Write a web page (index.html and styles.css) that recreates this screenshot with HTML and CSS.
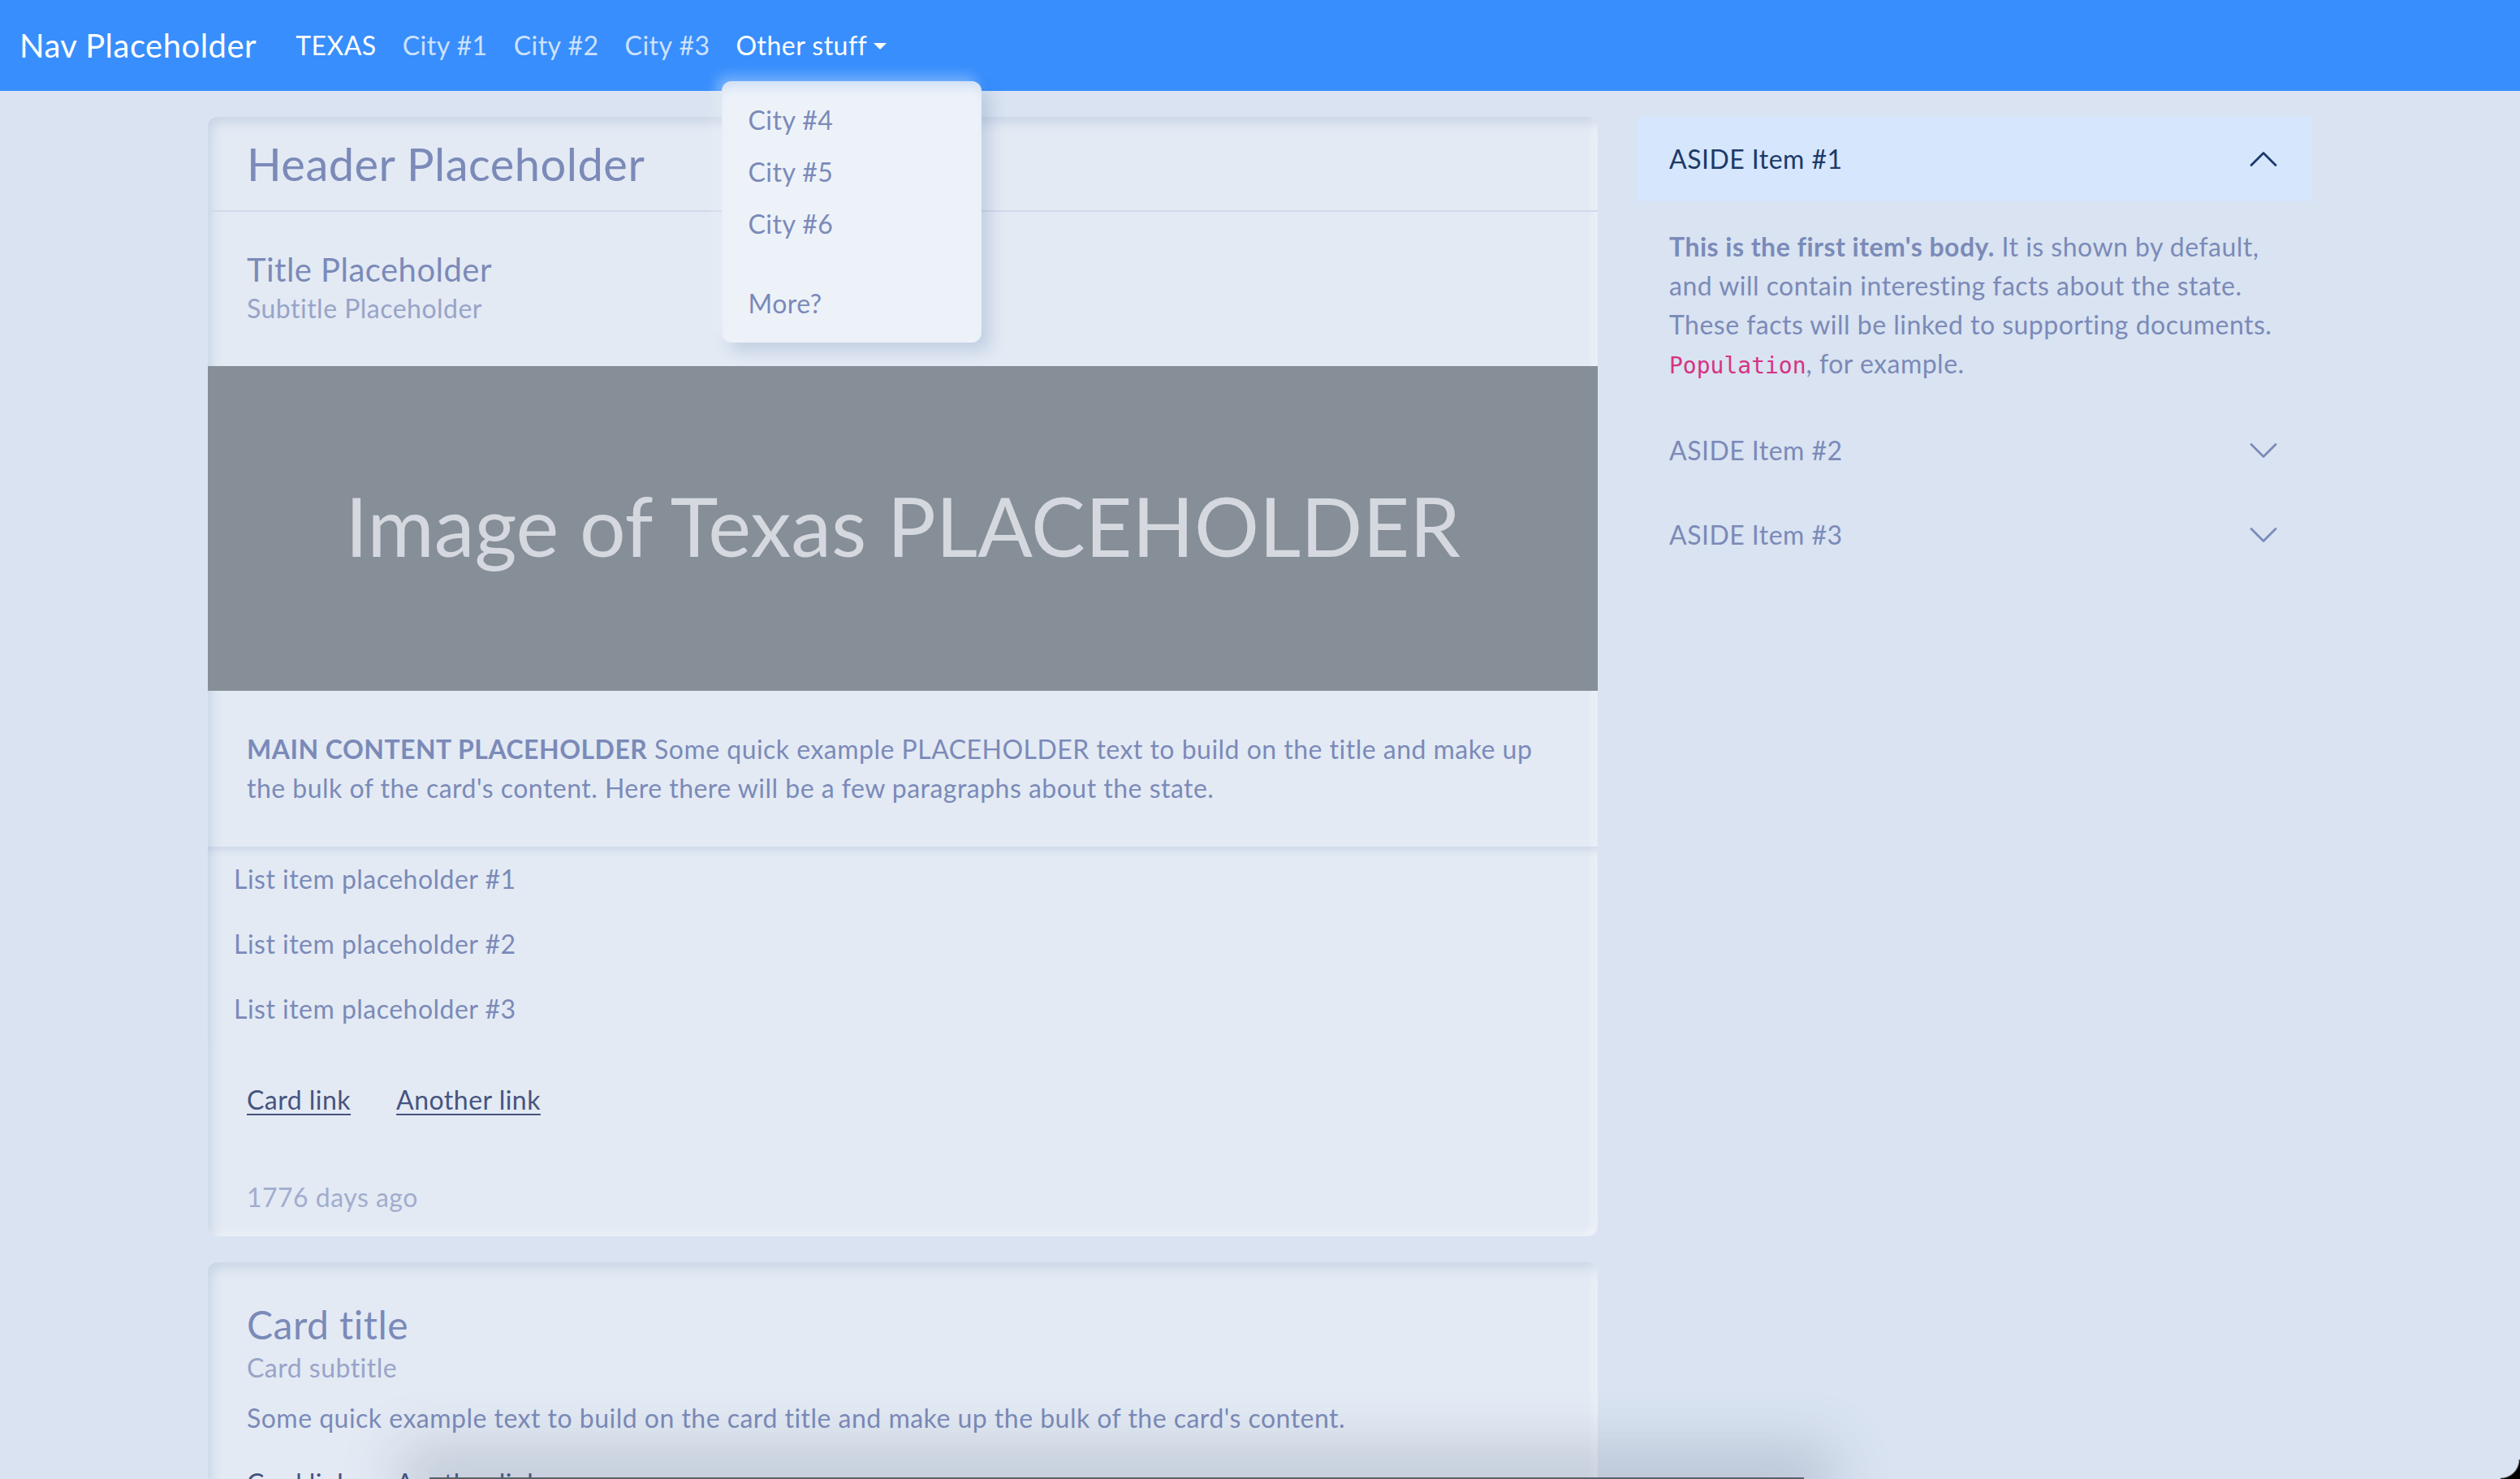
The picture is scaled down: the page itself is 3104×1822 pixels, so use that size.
FILE: index.html
```html
<!DOCTYPE html>
<html lang="en">
<head>
<meta charset="utf-8">
<title>Texas</title>
<link rel="stylesheet" href="styles.css">
</head>
<body>
<nav class="navbar">
  <a class="brand" href="#">Nav Placeholder</a>
  <ul class="nav">
    <li><a class="nav-link active" href="#">TEXAS</a></li>
    <li><a class="nav-link" href="#">City #1</a></li>
    <li><a class="nav-link" href="#">City #2</a></li>
    <li><a class="nav-link" href="#">City #3</a></li>
    <li class="dropdown">
      <a class="nav-link active" href="#">Other stuff<span class="caret"></span></a>
      <ul class="dropdown-menu">
        <li><a class="dropdown-item" href="#">City #4</a></li>
        <li><a class="dropdown-item" href="#">City #5</a></li>
        <li><a class="dropdown-item" href="#">City #6</a></li>
        <li class="dropdown-divider"></li>
        <li><a class="dropdown-item" href="#">More?</a></li>
      </ul>
    </li>
  </ul>
</nav>

<main class="container">
  <div class="main-col">
    <article class="card">
      <div class="card-header"><h3 class="header-title">Header Placeholder</h3></div>
      <div class="card-body intro">
        <h5 class="card-title">Title Placeholder</h5>
        <h6 class="card-subtitle">Subtitle Placeholder</h6>
      </div>
      <div class="hero"><span class="hero-text">Image of Texas PLACEHOLDER</span></div>
      <div class="card-body">
        <p class="card-text"><strong>MAIN CONTENT PLACEHOLDER</strong> Some quick example PLACEHOLDER text to build on the title and make up<br>the bulk of the card's content. Here there will be a few paragraphs about the state.</p>
      </div>
      <ul class="list-group">
        <li class="list-item">List item placeholder #1</li>
        <li class="list-item">List item placeholder #2</li>
        <li class="list-item">List item placeholder #3</li>
      </ul>
      <div class="card-body">
        <a class="card-link" href="#">Card link</a><a class="card-link" href="#">Another link</a>
      </div>
      <div class="card-footer">1776 days ago</div>
    </article>

    <article class="card">
      <div class="card-body">
        <h5 class="card-title big">Card title</h5>
        <h6 class="card-subtitle spaced">Card subtitle</h6>
        <p class="card-text spaced-p">Some quick example text to build on the card title and make up the bulk of the card's content.</p>
        <a class="card-link" href="#">Card link</a><a class="card-link" href="#">Another link</a>
      </div>
    </article>
  </div>

  <aside class="accordion">
    <div class="acc-item">
      <div class="acc-button open">
        <span>ASIDE Item #1</span>
        <svg class="chev" viewBox="0 0 16 16" width="40" height="40"><path d="M2 11L8 5L14 11" fill="none" stroke="currentColor" stroke-width="1.1" stroke-linecap="round" stroke-linejoin="round"/></svg>
      </div>
      <div class="acc-body">
        <strong>This is the first item's body.</strong> It is shown by default,<br>and will contain interesting facts about the state.<br>These facts will be linked to supporting documents.<br><code>Population</code>, for example.
      </div>
    </div>
    <div class="acc-item">
      <div class="acc-button">
        <span>ASIDE Item #2</span>
        <svg class="chev" viewBox="0 0 16 16" width="40" height="40"><path d="M2 5L8 11L14 5" fill="none" stroke="currentColor" stroke-width="1.1" stroke-linecap="round" stroke-linejoin="round"/></svg>
      </div>
    </div>
    <div class="acc-item">
      <div class="acc-button">
        <span>ASIDE Item #3</span>
        <svg class="chev" viewBox="0 0 16 16" width="40" height="40"><path d="M2 5L8 11L14 5" fill="none" stroke="currentColor" stroke-width="1.1" stroke-linecap="round" stroke-linejoin="round"/></svg>
      </div>
    </div>
  </aside>
</main>

<div class="screen-shadow"></div>
<div class="corner-br"></div>
</body>
</html>
```

FILE: styles.css
```css
* { box-sizing: border-box; }

html, body {
  margin: 0;
  padding: 0;
}

body {
  background: #d9e3f1;
  color: #7b8ab8;
  font-family: Lato, "Noto Sans", "Open Sans", sans-serif;
  font-size: 32px;
  line-height: 48px;
  letter-spacing: 0.015em;
  overflow: hidden;
  height: 1822px;
}

a { text-decoration: none; }

/* ---------- navbar ---------- */
.navbar {
  position: relative;
  z-index: 5;
  height: 112px;
  padding: 16px 24px;
  display: flex;
  align-items: center;
  background: #388efc;
}

.brand {
  color: #fff;
  font-size: 40px;
  line-height: 60px;
  margin-right: 32px;
}

.nav {
  display: flex;
  list-style: none;
  margin: 0;
  padding: 0;
}

.nav-link {
  display: block;
  padding: 16px;
  color: rgba(255, 255, 255, 0.75);
}

.nav-link.active { color: #fff; }

.caret {
  display: inline-block;
  margin-left: 8px;
  vertical-align: 7px;
  border-top: 8px solid #fff;
  border-left: 8px solid transparent;
  border-right: 8px solid transparent;
}

.dropdown { position: relative; }

.dropdown-menu {
  position: absolute;
  top: 84px;
  left: -1px;
  width: 320px;
  margin: 0;
  padding: 16px 0;
  list-style: none;
  background: #edf2f9;
  border-radius: 12px;
  box-shadow:
    inset 0 14px 14px -8px rgba(120, 170, 240, 0.28),
    10px 10px 20px rgba(55, 94, 148, 0.2),
    -6px -6px 16px rgba(255, 255, 255, 0.35);
}

.dropdown-item {
  display: block;
  padding: 8px 32px;
  color: #7b8ab8;
}

.dropdown-divider {
  height: 2px;
  margin: 16px 0;
  background: transparent;
}

/* ---------- layout ---------- */
.container {
  width: 2592px;
  margin: 32px auto 0;
  display: grid;
  grid-template-columns: 1712px 832px;
  column-gap: 48px;
  align-items: start;
}

.main-col {
  display: flex;
  flex-direction: column;
  gap: 32px;
}

/* ---------- cards ---------- */
.card {
  background: #e3eaf4;
  border-radius: 12px;
  overflow: hidden;
  box-shadow:
    inset 4px 6px 14px rgba(55, 94, 148, 0.16),
    inset -6px -4px 10px rgba(255, 255, 255, 0.55);
}

.card-header {
  padding: 24px 48px;
  border-bottom: 2px solid #d0daea;
}

.header-title {
  margin: 0;
  font-size: 56px;
  line-height: 67px;
  font-weight: 400;
}

.card-body {
  padding: 48px;
}

.card-body.intro { padding: 47px 48px; }

.card-title {
  margin: 0;
  font-size: 40px;
  line-height: 48px;
  font-weight: 400;
}

.card-title.big {
  font-size: 48px;
  line-height: 58px;
}

.card-subtitle {
  margin: 0;
  font-size: 32px;
  line-height: 48px;
  font-weight: 400;
  color: #98a4c8;
}

.card-subtitle.spaced { margin-bottom: 14px; }

.card-text { margin: 0; }
.card-text.spaced-p { margin-bottom: 32px; }

.card-text strong { font-weight: 700; }

.hero {
  height: 400px;
  background: #868e97;
  display: flex;
  align-items: center;
  justify-content: center;
}

.hero-text {
  font-size: 100px;
  line-height: 1;
  letter-spacing: 0;
  color: #d5d9df;
  transform: translateY(-4px);
}

.list-group {
  list-style: none;
  margin: 0;
  padding: 0;
  box-shadow: inset 0 12px 12px -10px rgba(55, 94, 148, 0.18);
}

.list-item {
  padding: 16px 32px;
}

.card-link {
  color: #46547f;
  text-decoration: underline;
  text-underline-offset: 5px;
  text-decoration-thickness: 2px;
}

.card-link + .card-link { margin-left: 56px; }

.card-footer {
  padding: 24px 48px;
  color: #a2adcd;
}

/* ---------- accordion ---------- */
.acc-button {
  height: 104px;
  padding: 0 40px;
  display: flex;
  align-items: center;
  justify-content: space-between;
  color: #7b8ab8;
}

.acc-button.open {
  background: #d6e6fd;
  color: #1b3a68;
}

.chev { display: block; }

.acc-body {
  padding: 32px 40px 28px;
}

.acc-body strong { font-weight: 700; }

.acc-body code {
  font-family: "DejaVu Sans Mono", "Liberation Mono", monospace;
  font-size: 28px;
  letter-spacing: 0;
  color: #d63384;
}

/* ---------- screen artefacts ---------- */
.screen-shadow {
  position: fixed;
  left: 529px;
  width: 1693px;
  bottom: 0;
  height: 2px;
  background: #5b6069;
  box-shadow: 0 0 70px 34px rgba(90, 105, 130, 0.28);
  z-index: 10;
}

.corner-br {
  position: fixed;
  right: 0;
  bottom: 0;
  width: 24px;
  height: 24px;
  background: radial-gradient(circle at 0 0, transparent 22px, #000 24px);
  z-index: 11;
}
```
